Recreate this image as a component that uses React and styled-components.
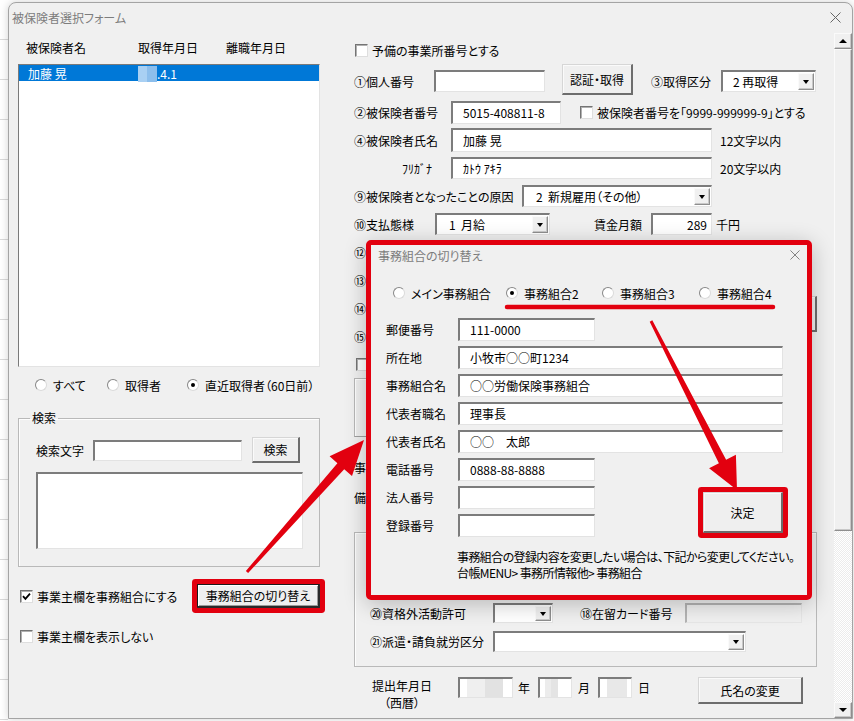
import React from 'react';
import styled, { createGlobalStyle, css } from 'styled-components';

const RED = '#e2000f';

const GlobalStyle = createGlobalStyle`
  html, body { margin: 0; padding: 0; }
  body {
    width: 854px;
    height: 721px;
    overflow: hidden;
    background: #fff;
    font-family: "Noto Sans CJK JP", "Noto Sans", sans-serif;
    font-size: 12px;
    font-feature-settings: "palt";
    color: #000;
  }
  * { box-sizing: border-box; }
`;

const Page = styled.div`
  position: relative;
  width: 854px;
  height: 721px;
  display: flex;
  background: #fff;
  overflow: hidden;
`;

const Sheet = styled.div`
  width: 8px;
  flex: none;
  background: repeating-linear-gradient(to bottom, #fff 0 39px, #dadada 39px 40px);
`;

const Window = styled.div`
  margin-top: 2px;
  width: 845px;
  height: 717px;
  flex: none;
  display: flex;
  flex-direction: column;
  background: #f0f0f0;
  border: 1px solid #a4a4a4;
  border-radius: 8px 8px 0 0;
  box-shadow: 0 0 8px rgba(0, 0, 0, 0.18);
`;

const TitleBar = styled.div`
  height: 30px;
  flex: none;
  display: flex;
  align-items: center;
  justify-content: space-between;
  padding: 0 11px 2px 3px;
  color: #7d7d7d;
  font-size: 12px;
`;

const CloseX = ({ color = '#666', size = 11 }) => (
  <svg width={size} height={size} viewBox="0 0 11 11">
    <path d="M0.5 0.5 L10.5 10.5 M10.5 0.5 L0.5 10.5" stroke={color} strokeWidth="1" />
  </svg>
);

const Body = styled.div`
  flex: 1;
  display: flex;
  min-height: 0;
`;

const LeftPanel = styled.div`
  width: 302px;
  margin-left: 9px;
  padding-top: 3px;
  display: flex;
  flex-direction: column;
  flex: none;
`;

const RightPanel = styled.div`
  width: 480px;
  margin-left: 34px;
  padding-top: 3px;
  display: flex;
  flex-direction: column;
  flex: none;
`;

/* ---------- scrollbar ---------- */
const ScrollBar = styled.div`
  width: 18px;
  flex: none;
  display: flex;
  flex-direction: column;
`;

const raised = css`
  background: #f0f0f0;
  border: 1px solid;
  border-color: #fafafa #8e8e8e #8e8e8e #fafafa;
  box-shadow: inset -1px -1px 0 #c8c8c8;
`;

const ScrollBtn = styled.div`
  height: 16px;
  flex: none;
  ${raised};
  display: flex;
  align-items: center;
  justify-content: center;
  &::after {
    content: '';
    border-left: 4px solid transparent;
    border-right: 4px solid transparent;
    ${p => (p.$down ? 'border-top: 4px solid #000;' : 'border-bottom: 4px solid #000;')}
  }
`;

const Thumb = styled.div`
  height: 482px;
  flex: none;
  ${raised};
`;

const Track = styled.div`
  flex: 1;
  background: repeating-conic-gradient(#ffffff 0 25%, #ececec 0 50%) 0 0 / 2px 2px;
`;

/* ---------- basic controls ---------- */
const Row = styled.div`
  display: flex;
  align-items: center;
  height: ${p => p.$h || 28}px;
  flex: none;
  padding-left: ${p => p.$pl || 0}px;
  margin-top: ${p => p.$mt || 0}px;
`;

const Label = styled.span`
  flex: none;
  white-space: nowrap;
  width: ${p => (p.$w ? `${p.$w}px` : 'auto')};
  margin-left: ${p => p.$ml || 0}px;
  padding-left: ${p => p.$pl || 0}px;
  font-size: ${p => p.$fs || 12}px;
`;

const Field = styled.div`
  flex: none;
  width: ${p => p.$w}px;
  height: ${p => p.$h || 22}px;
  margin-left: ${p => p.$ml || 0}px;
  background: ${p => (p.$disabled ? '#f0f0f0' : '#fff')};
  border-style: solid;
  border-width: 2px 1px 1px 2px;
  border-color: ${p => (p.$disabled ? '#b4b4b4 #e6e6e6 #e6e6e6 #b4b4b4' : '#7c7c7c #e3e3e3 #e3e3e3 #7c7c7c')};
  padding: 0 ${p => p.$pr || 0}px 0 ${p => (p.$pad === undefined ? 10 : p.$pad)}px;
  display: flex;
  align-items: center;
  justify-content: ${p => (p.$right ? 'flex-end' : 'flex-start')};
  white-space: nowrap;
  overflow: hidden;
`;

const Mosaic = styled.span`
  width: ${p => p.$w}px;
  height: 100%;
  margin-left: ${p => p.$ml || 0}px;
  flex: none;
  background: linear-gradient(to right, ${p => p.$a} 0 50%, ${p => p.$b} 50% 100%);
`;

const Button = styled.button`
  flex: none;
  font: inherit;
  color: #000;
  width: ${p => p.$w}px;
  height: ${p => p.$h}px;
  margin-left: ${p => (p.$ml === 'auto' ? 'auto' : `${p.$ml || 0}px`)};
  padding: 0;
  background: #efefef;
  border-style: solid;
  border-width: 1px 2px 2px 1px;
  border-color: ${p => (p.$default ? '#1a1a1a #2a2a2a #2a2a2a #1a1a1a' : '#d6d6d6 #6d6d6d #6d6d6d #d6d6d6')};
  box-shadow: ${p => (p.$default ? 'inset 1px 1px 0 #fff, inset -1px -1px 0 #9a9a9a' : 'inset 1px 1px 0 #fafafa')}
    ${p => (p.$highlight ? `, 0 0 0 5px ${RED}` : '')};
  border-radius: ${p => (p.$highlight ? '1px' : '0')};
  white-space: nowrap;
`;

const SelectBox = styled(Field)`
  padding: 0;
`;

const SelectValue = styled.span`
  flex: 1;
  padding-left: ${p => p.$pad || 12}px;
  white-space: pre;
  overflow: hidden;
`;

const DropBtn = styled.span`
  width: 16px;
  align-self: stretch;
  margin: 1px;
  flex: none;
  ${raised};
  display: flex;
  align-items: center;
  justify-content: center;
  &::after {
    content: '';
    border-left: 3.5px solid transparent;
    border-right: 3.5px solid transparent;
    border-top: 4px solid #000;
  }
`;

const Select = ({ w, h, ml, value, pad, disabled }) => (
  <SelectBox $w={w} $h={h} $ml={ml} $disabled={disabled}>
    <SelectValue $pad={pad}>{value}</SelectValue>
    <DropBtn />
  </SelectBox>
);

const CheckItem = styled.span`
  display: flex;
  align-items: center;
  gap: 4px;
  flex: none;
  white-space: nowrap;
  margin-left: ${p => p.$ml || 0}px;
`;

const Box = styled.span`
  width: 13px;
  height: 13px;
  flex: none;
  background: #fff;
  border: 1px solid;
  border-color: #747474 #dedede #dedede #747474;
  box-shadow: inset 1px 1px 0 #b0b0b0;
  display: inline-flex;
  align-items: center;
  justify-content: center;
`;

const Check = ({ checked, children, ml }) => (
  <CheckItem $ml={ml}>
    <Box>
      {checked && (
        <svg width="9" height="9" viewBox="0 0 9 9">
          <path d="M1 4.2 L3.4 6.8 L8 1.6" fill="none" stroke="#000" strokeWidth="1.8" />
        </svg>
      )}
    </Box>
    {children}
  </CheckItem>
);

const RadioItem = styled.span`
  display: flex;
  align-items: center;
  gap: 6px;
  flex: none;
  white-space: nowrap;
  width: ${p => (p.$w ? `${p.$w}px` : 'auto')};
`;

const Circle = styled.span`
  width: 12px;
  height: 12px;
  flex: none;
  border-radius: 50%;
  background: #fff;
  border: 1px solid;
  border-color: #878787 #dadada #dadada #878787;
  display: flex;
  align-items: center;
  justify-content: center;
  &::after {
    content: '';
    width: 4px;
    height: 4px;
    border-radius: 50%;
    background: ${p => (p.$on ? '#000' : 'transparent')};
  }
`;

const Radio = ({ on, w, children }) => (
  <RadioItem $w={w}>
    <Circle $on={on} />
    {children}
  </RadioItem>
);

/* ---------- left panel ---------- */
const HeaderRow = styled.div`
  height: 22px;
  flex: none;
  display: grid;
  grid-template-columns: 112px 88px auto;
  align-items: center;
  padding-left: 8px;
`;

const ListBox = styled.div`
  margin-top: 6px;
  height: 303px;
  flex: none;
  background: #fff;
  border: 1px solid;
  border-color: #7a7a7a #e3e3e3 #e3e3e3 #7a7a7a;
`;

const ListRow = styled.div`
  height: 16px;
  display: grid;
  grid-template-columns: 110px auto;
  align-items: center;
  padding-left: 9px;
  background: ${p => (p.$selected ? '#0078d7' : 'transparent')};
  color: ${p => (p.$selected ? '#fff' : '#000')};
`;

const DateCell = styled.span`
  display: flex;
  height: 16px;
  align-items: center;
`;

const Search = styled.fieldset`
  margin: 7px 0 0;
  width: 302px;
  padding: 11px 16px 17px 17px;
  border: 1px solid #b9b9b9;
  box-shadow: inset 1px 1px 0 #fdfdfd;
  min-inline-size: 0;
  flex: none;
`;

const Legend = styled.legend`
  font-size: 12px;
  line-height: 16px;
  padding: 0 2px;
  margin-left: -6px;
`;

const TextArea = styled.div`
  margin-top: 9px;
  width: 267px;
  height: 77px;
  background: #fff;
  border-style: solid;
  border-width: 2px 1px 1px 2px;
  border-color: #7c7c7c #e3e3e3 #e3e3e3 #7c7c7c;
`;

/* ---------- right panel ---------- */
const SplitBlock = styled.div`
  display: flex;
  height: 56px;
  flex: none;
`;

const Col = styled.div`
  display: flex;
  flex-direction: column;
`;

const SideButton = styled(Button)`
  margin: 2px 17px 0 auto;
`;

const Pane = styled.div`
  height: 59px;
  width: 440px;
  flex: none;
  background: #f0f0f0;
  border: 1px solid;
  border-color: #b8b8b8 #a0a0a0 #a0a0a0 #b8b8b8;
  box-shadow: inset 1px 1px 0 #fff;
`;

const Group = styled.div`
  margin-top: 20px;
  width: 463px;
  height: 135px;
  flex: none;
  border: 1px solid #b9b9b9;
  box-shadow: inset 1px 1px 0 #fdfdfd;
  padding: 10px 0 11px 15px;
  display: flex;
  flex-direction: column;
`;

const BottomRow = styled.div`
  margin-top: 10px;
  display: flex;
  align-items: flex-start;
  flex: none;
`;

const TwoLine = styled.div`
  width: 104px;
  padding-left: 18px;
  flex: none;
  display: flex;
  flex-direction: column;
  align-items: flex-start;
  line-height: 17px;
`;

const Centered = styled.div`
  display: flex;
  flex-direction: column;
  align-items: center;
`;

const DateGroup = styled.div`
  height: 21px;
  display: flex;
  align-items: center;
  flex: none;
`;

/* ---------- dialog ---------- */
const DialogFrame = styled.div`
  position: absolute;
  left: 366px;
  top: 240px;
  width: 446px;
  height: 360px;
  border: 5px solid ${RED};
  border-radius: 5px;
  box-shadow: 0 4px 22px rgba(0, 0, 0, 0.24);
  z-index: 5;
`;

const Dialog = styled.div`
  width: 100%;
  height: 100%;
  background: #f0f0f0;
  display: flex;
  flex-direction: column;
`;

const DialogTitle = styled.div`
  height: 20px;
  flex: none;
  display: flex;
  align-items: center;
  justify-content: space-between;
  padding: 0 7px;
  color: #7c7c7c;
`;

const DialogBody = styled.div`
  padding: 14px 0 14px;
  display: flex;
  flex-direction: column;
`;

const RadioBar = styled.div`
  height: 28px;
  display: flex;
  align-items: center;
  padding-left: 22px;
`;

const FieldGrid = styled.div`
  margin-top: 8px;
  padding-left: 15px;
  display: grid;
  grid-template-columns: 72px 137px 105px 83px;
  grid-auto-rows: 28px;
  align-items: center;
`;

const GridLabel = styled.span`
  grid-column: 1;
  white-space: nowrap;
`;

const GridField = styled(Field)`
  grid-column: ${p => (p.$long ? '2 / 5' : '2')};
  width: ${p => (p.$long ? '325px' : '137px')};
  height: 23px;
`;

const DecideButton = styled(Button)`
  grid-column: 4;
  grid-row: 7 / span 2;
  align-self: start;
  margin: 9px 0 0 3px;
`;

const Note = styled.div`
  margin-top: 10px;
  padding-left: 86px;
  line-height: 16px;
  letter-spacing: -0.6px;
  white-space: nowrap;
`;

/* ---------- annotations ---------- */
const Overlay = styled.svg`
  position: absolute;
  left: 0;
  top: 0;
  z-index: 10;
  pointer-events: none;
`;

function arrowPoints(tail, tip, tw, nw, hl, hw) {
  const dx = tip[0] - tail[0];
  const dy = tip[1] - tail[1];
  const len = Math.hypot(dx, dy);
  const ux = dx / len;
  const uy = dy / len;
  const nx = -uy;
  const ny = ux;
  const bx = tip[0] - ux * hl;
  const by = tip[1] - uy * hl;
  const p = (x, y) => `${x.toFixed(1)},${y.toFixed(1)}`;
  return [
    p(tail[0] + nx * tw, tail[1] + ny * tw),
    p(bx + nx * nw, by + ny * nw),
    p(bx + nx * hw, by + ny * hw),
    p(tip[0], tip[1]),
    p(bx - nx * hw, by - ny * hw),
    p(bx - nx * nw, by - ny * nw),
    p(tail[0] - nx * tw, tail[1] - ny * tw),
  ].join(' ');
}

const Annotations = () => (
  <Overlay width="854" height="721" viewBox="0 0 854 721">
    <line x1="507" y1="307" x2="773" y2="307" stroke={RED} strokeWidth="4.5" strokeLinecap="round" />
    <polygon points={arrowPoints([247, 572], [364, 440], 1.5, 4.5, 35, 15)} fill={RED} />
    <polygon points={arrowPoints([651, 321], [737, 490], 1.5, 4, 32, 15)} fill={RED} />
  </Overlay>
);

const UnionDialog = () => (
  <DialogFrame>
    <Dialog>
      <DialogTitle>
        <span>事務組合の切り替え</span>
        <CloseX color="#777" size={10} />
      </DialogTitle>
      <DialogBody>
        <RadioBar>
          <Radio w={113}>メイン事務組合</Radio>
          <Radio w={96} on>事務組合2</Radio>
          <Radio w={97}>事務組合3</Radio>
          <Radio>事務組合4</Radio>
        </RadioBar>
        <FieldGrid>
          <GridLabel>郵便番号</GridLabel>
          <GridField>111-0000</GridField>
          <GridLabel>所在地</GridLabel>
          <GridField $long>小牧市○○町1234</GridField>
          <GridLabel>事務組合名</GridLabel>
          <GridField $long>○○労働保険事務組合</GridField>
          <GridLabel>代表者職名</GridLabel>
          <GridField $long>理事長</GridField>
          <GridLabel>代表者氏名</GridLabel>
          <GridField $long>○○　太郎</GridField>
          <GridLabel>電話番号</GridLabel>
          <GridField>0888-88-8888</GridField>
          <GridLabel>法人番号</GridLabel>
          <GridField />
          <DecideButton $w={80} $h={41} $highlight>決定</DecideButton>
          <GridLabel>登録番号</GridLabel>
          <GridField />
        </FieldGrid>
        <Note>
          事務組合の登録内容を変更したい場合は、下記から変更してください。
          <br />
          台帳MENU&gt; 事務所情報他&gt; 事務組合
        </Note>
      </DialogBody>
    </Dialog>
  </DialogFrame>
);

export default function App() {
  return (
    <Page>
      <GlobalStyle />
      <Sheet />
      <Window>
        <TitleBar>
          <span>被保険者選択フォーム</span>
          <CloseX />
        </TitleBar>
        <Body>
          <LeftPanel>
            <HeaderRow>
              <span>被保険者名</span>
              <span>取得年月日</span>
              <span>離職年月日</span>
            </HeaderRow>
            <ListBox>
              <ListRow $selected>
                <span>加藤 晃</span>
                <DateCell>
                  <Mosaic $w={19} $a="#a9d0f3" $b="#8cbeec" />
                  .4.1
                </DateCell>
              </ListRow>
            </ListBox>
            <Row $h={36} $pl={17}>
              <Radio w={72}>すべて</Radio>
              <Radio w={80}>取得者</Radio>
              <Radio on>直近取得者（60日前）</Radio>
            </Row>
            <Search>
              <Legend>検索</Legend>
              <Row $h={26}>
                <Label $w={57}>検索文字</Label>
                <Field $w={149} $h={21} />
                <Button $w={48} $h={26} $ml={10}>検索</Button>
              </Row>
              <TextArea />
            </Search>
            <Row $mt={15} $pl={2}>
              <Check checked>事業主欄を事務組合にする</Check>
              <Button $w={123} $h={24} $ml="auto" $default $highlight>事務組合の切り替え</Button>
            </Row>
            <Row $mt={12} $pl={2}>
              <Check>事業主欄を表示しない</Check>
            </Row>
          </LeftPanel>

          <RightPanel>
            <Row $pl={1}>
              <Check>予備の事業所番号とする</Check>
            </Row>
            <Row $h={34}>
              <Label $w={80}>①個人番号</Label>
              <Field $w={111} />
              <Button $w={71} $h={31} $ml={17} style={{ alignSelf: 'flex-start' }}>認証・取得</Button>
              <Label $w={70} $ml={18}>③取得区分</Label>
              <Select w={95} value="2 再取得" pad={10} />
            </Row>
            <Row>
              <Label $w={97}>②被保険者番号</Label>
              <Field $w={110} $h={23}>5015-408811-8</Field>
              <Check ml={19}>被保険者番号を「9999-999999-9」とする</Check>
            </Row>
            <Row>
              <Label $w={97}>④被保険者氏名</Label>
              <Field $w={261} $h={24}>加藤 晃</Field>
              <Label $ml={8}>12文字以内</Label>
            </Row>
            <Row>
              <Label $w={97} $pl={48}>ﾌﾘｶﾞﾅ</Label>
              <Field $w={261}>ｶﾄｳ ｱｷﾗ</Field>
              <Label $ml={8}>20文字以内</Label>
            </Row>
            <Row>
              <Label $w={168}>⑨被保険者となったことの原因</Label>
              <Select w={190} value="2  新規雇用（その他）" pad={12} />
            </Row>
            <Row>
              <Label $w={81}>⑩支払態様</Label>
              <Select w={115} value="1  月給" pad={12} />
              <Label $w={57} $ml={44}>賃金月額</Label>
              <Field $w={61} $right $pr={4}>289</Field>
              <Label $ml={4}>千円</Label>
            </Row>
            <Row>
              <Label>⑫</Label>
            </Row>
            <Row>
              <Label>⑬</Label>
            </Row>
            <SplitBlock>
              <Col>
                <Row>
                  <Label>⑭</Label>
                </Row>
                <Row>
                  <Label>⑮</Label>
                </Row>
              </Col>
              <SideButton $w={120} $h={36} />
            </SplitBlock>
            <Row $pl={2}>
              <Check />
            </Row>
            <Pane />
            <Row $h={30} $mt={15}>
              <Label>事</Label>
            </Row>
            <Row $h={30}>
              <Label>備</Label>
            </Row>
            <Group>
              <Row />
              <Row />
              <Row>
                <Label $w={123}>⑳資格外活動許可</Label>
                <Select w={60} h={20} value="" />
                <Label $w={105} $ml={27}>⑱在留カード番号</Label>
                <Field $w={117} $h={20} $disabled />
              </Row>
              <Row>
                <Label $w={123}>㉑派遣・請負就労区分</Label>
                <Select w={253} h={21} value="" />
              </Row>
            </Group>
            <BottomRow>
              <TwoLine>
                <Centered>
                  <span>提出年月日</span>
                  <span>（西暦）</span>
                </Centered>
              </TwoLine>
              <DateGroup>
                <Field $w={55} $h={21} $pad={7}>
                  <Mosaic $w={36} $a="#efefef" $b="#e2e2e2" />
                </Field>
                <Label $ml={5}>年</Label>
                <Field $w={34} $h={21} $ml={8} $pad={5}>
                  <Mosaic $w={13} $a="#ececec" $b="#e4e4e4" />
                </Field>
                <Label $ml={6}>月</Label>
                <Field $w={34} $h={21} $ml={8} $pad={7}>
                  <Mosaic $w={20} $a="#e8e8e8" $b="#e8e8e8" />
                </Field>
                <Label $ml={6}>日</Label>
              </DateGroup>
              <Button $w={105} $h={27} $ml={48}>氏名の変更</Button>
            </BottomRow>
          </RightPanel>

          <ScrollBar>
            <ScrollBtn />
            <Thumb />
            <Track />
            <ScrollBtn $down />
          </ScrollBar>
        </Body>
      </Window>
      <UnionDialog />
      <Annotations />
    </Page>
  );
}
